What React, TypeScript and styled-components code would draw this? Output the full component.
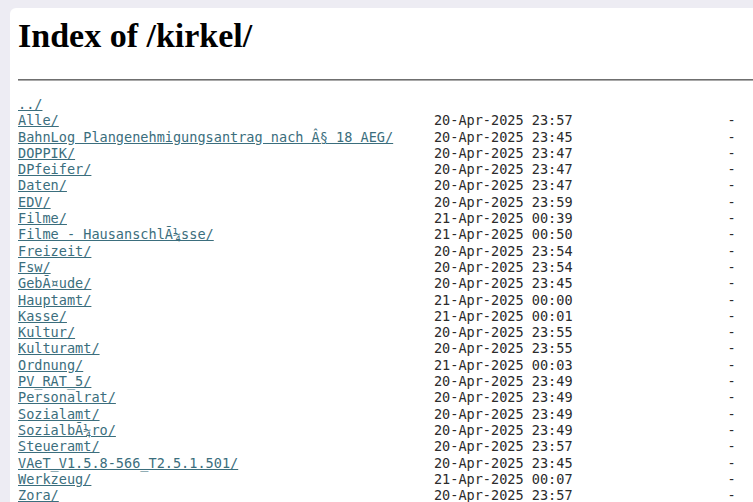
import { FC } from "react";
import styled, { createGlobalStyle } from "styled-components";

const GlobalStyle = createGlobalStyle`
  html, body {
    margin: 0;
    padding: 0;
    background: #edecf3;
    overflow: hidden;
  }
`;

const Page = styled.div`
  width: 753px;
  height: 502px;
  padding: 8px 0 0 10px;
  box-sizing: border-box;
  overflow: hidden;
`;

const Panel = styled.div`
  background: #ffffff;
  border-top-left-radius: 6px;
  padding: 4px 0 0 8px;
  height: 100%;
`;

const Heading = styled.h1`
  font-family: "Liberation Serif", "Times New Roman", serif;
  font-weight: bold;
  font-size: 34px;
  line-height: 40px;
  color: #000;
  margin: 4px 0 0 0;
`;

const Rule = styled.hr`
  margin: 23px 0 0 0;
  border: 0;
  border-top: 1px solid #6f6f6f;
  border-bottom: 1px solid #a9a9a9;
  height: 0;
`;

const Listing = styled.div`
  margin-top: 15px;
  font-family: "DejaVu Sans Mono", "Liberation Mono", monospace;
  font-size: 13.55px;
  line-height: 16.3px;
  color: #2b2b2b;
  white-space: pre;
`;

const Row = styled.div`
  display: grid;
  grid-template-columns: 51ch 17ch 20ch;
`;

const Name = styled.a`
  color: #3b6e7d;
  text-decoration: underline;
  text-underline-offset: 1px;
  justify-self: start;
`;

const Size = styled.span`
  text-align: right;
`;

const entries: [string, string][] = [
  ["Alle/", "20-Apr-2025 23:57"],
  ["BahnLog Plangenehmigungsantrag nach Â§ 18 AEG/", "20-Apr-2025 23:45"],
  ["DOPPIK/", "20-Apr-2025 23:47"],
  ["DPfeifer/", "20-Apr-2025 23:47"],
  ["Daten/", "20-Apr-2025 23:47"],
  ["EDV/", "20-Apr-2025 23:59"],
  ["Filme/", "21-Apr-2025 00:39"],
  ["Filme - HausanschlÃ¼sse/", "21-Apr-2025 00:50"],
  ["Freizeit/", "20-Apr-2025 23:54"],
  ["Fsw/", "20-Apr-2025 23:54"],
  ["GebÃ¤ude/", "20-Apr-2025 23:45"],
  ["Hauptamt/", "21-Apr-2025 00:00"],
  ["Kasse/", "21-Apr-2025 00:01"],
  ["Kultur/", "20-Apr-2025 23:55"],
  ["Kulturamt/", "20-Apr-2025 23:55"],
  ["Ordnung/", "21-Apr-2025 00:03"],
  ["PV_RAT_5/", "20-Apr-2025 23:49"],
  ["Personalrat/", "20-Apr-2025 23:49"],
  ["Sozialamt/", "20-Apr-2025 23:49"],
  ["SozialbÃ¼ro/", "20-Apr-2025 23:49"],
  ["Steueramt/", "20-Apr-2025 23:57"],
  ["VAeT_V1.5.8-566_T2.5.1.501/", "20-Apr-2025 23:45"],
  ["Werkzeug/", "21-Apr-2025 00:07"],
  ["Zora/", "20-Apr-2025 23:57"],
];

export const App: FC = () => {
  return (
    <Page>
      <GlobalStyle />
      <Panel>
        <Heading>Index of /kirkel/</Heading>
        <Rule />
        <Listing>
          <Row>
            <Name href="#">../</Name>
          </Row>
          {entries.map(([name, date]) => (
            <Row key={name}>
              <Name href="#">{name}</Name>
              <span>{date}</span>
              <Size>-</Size>
            </Row>
          ))}
        </Listing>
      </Panel>
    </Page>
  );
};

export default App;
